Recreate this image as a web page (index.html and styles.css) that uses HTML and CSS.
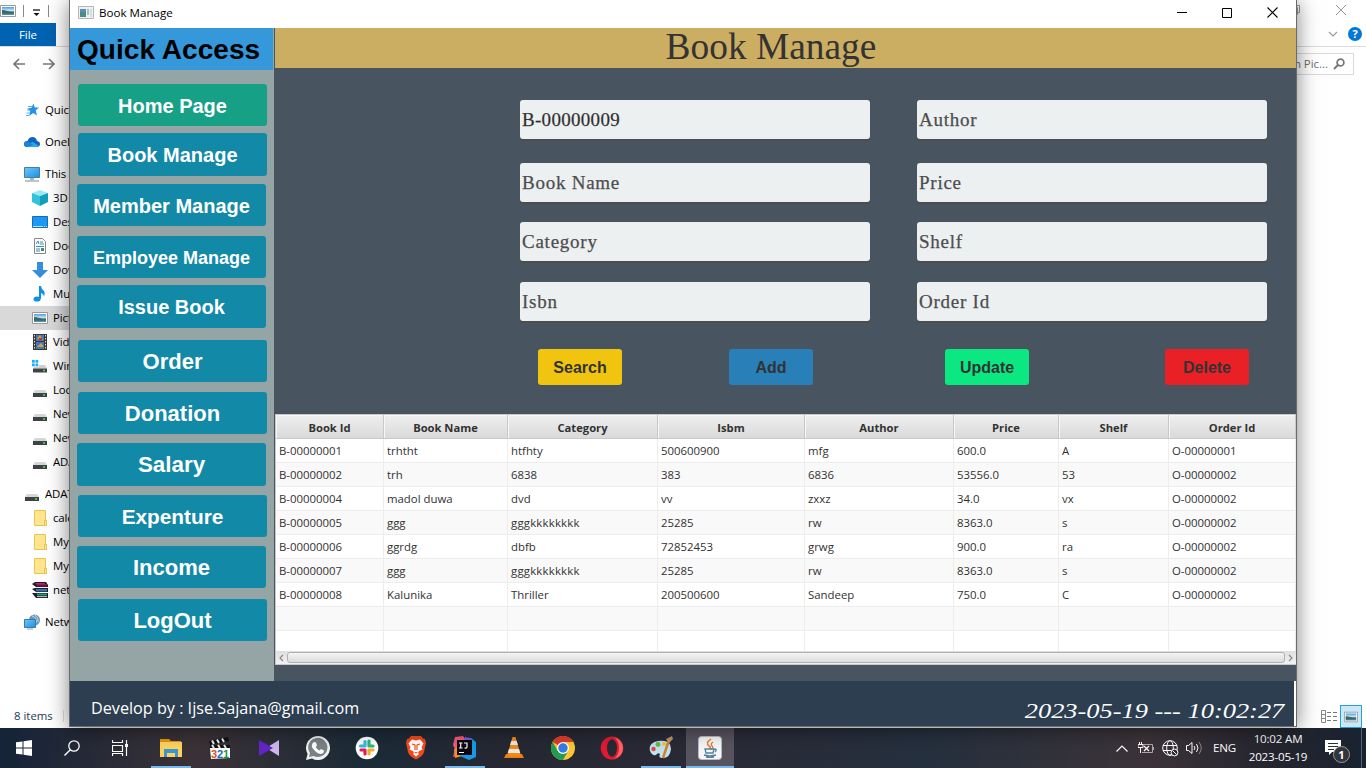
FILE: index.html
```html
<!DOCTYPE html>
<html lang="en">
<head>
<meta charset="utf-8">
<title>Book Manage</title>
<link rel="stylesheet" href="styles.css">
</head>
<body>
<svg class="defs" width="0" height="0">
  <defs>
    <linearGradient id="gBlue" x1="0" y1="0" x2="1" y2="1"><stop offset="0" stop-color="#6cc8fb"/><stop offset="1" stop-color="#1a8fe3"/></linearGradient>
    <linearGradient id="gSky" x1="0" y1="0" x2="0" y2="1"><stop offset="0" stop-color="#4d9de6"/><stop offset=".5" stop-color="#dcebf5"/><stop offset=".6" stop-color="#35665f"/><stop offset="1" stop-color="#5c96bd"/></linearGradient>
    <symbol id="drive" viewBox="0 0 16 16"><path d="M3 8h10l2 3H1z" fill="#d4d6d8"/><path d="M1 11h14v4H1z" fill="#3f4347"/><path d="M11 13h2" stroke="#4be34b" stroke-width="1.4"/></symbol>
    <symbol id="folder" viewBox="0 0 16 16"><path d="M2.500.5h11v10h1v5h-12z" fill="#ffe58f" stroke="#e9c44f"/><path d="M12.500 15v-4.500h2v5h-2" fill="#ffe58f" stroke="#e9c44f"/></symbol>
    <symbol id="picture" viewBox="0 0 16 16"><path d="M.5 2.500h15v11H.5z" fill="#fff" stroke="#999"/><path d="M2 4h12v8H2z" fill="url(#gSky)"/><path d="M2 7q5 0 12 3.500H2z" fill="#386a68"/></symbol>
  </defs>
</svg>
<div class="desktop">
  <div class="explorer">
    <div class="quickbar"><svg width="16" height="16"><use href="#picture"/></svg><i class="vline first"></i><svg class="qdrop" width="9" height="8" viewBox="0 0 9 8"><path d="M1 1h7" stroke="#111" stroke-width="1.300"/><path d="M1.500 4h6l-3 3z" fill="#111"/></svg><i class="vline"></i></div>
    <div class="ribbon"><span class="file">File</span></div>
    <div class="nav"><svg width="14" height="14" viewBox="0 0 14 14"><path d="M13 7H2M7 2L2 7l5 5" fill="none" stroke="#777" stroke-width="1.700"/></svg><svg width="14" height="14" viewBox="0 0 14 14"><path d="M1 7h11M7 2l5 5-5 5" fill="none" stroke="#777" stroke-width="1.700"/></svg></div>
    <div class="tree">
      <div class="node top gap"><svg viewBox="0 0 16 16"><path d="M9.500 1.500l1.300 4 4.200 0-3.300 3 1.300 5-3.800-2.400-4 3 1-4.800L3.500 6.500l4-.7z" fill="#2590e4"/><path d="M4 4.500h4M3 8h4M2.500 11h4M2 13.500h3" stroke="#45aaf0" stroke-width=".9"/></svg>Quic</div>
      <div class="node top gap"><svg viewBox="0 0 16 16"><path d="M3 13Q0 13 0 10t3.500-3Q5 3 8.500 3t4.500 4q3 .5 3 3t-3 3z" fill="#0f65c0"/><path d="M3 13q1-4 6-5l6 4q-1 1-2 1z" fill="#28a8ea"/><path d="M0 9q2-3 5-1l4 3-6 2Q0 13 0 9" fill="#1784d8"/></svg>OneD</div>
      <div class="node top"><svg viewBox="0 0 16 16"><path d="M.5 1.500h15v10H.5z" fill="url(#gBlue)" stroke="#497c9e"/><path d="M6 12h4v2H6z" fill="#9eb8c9"/><path d="M1 15h14" stroke="#75899a"/></svg>This</div>
      <div class="node"><svg viewBox="0 0 16 16"><path d="M8 0l8 3-8 3-8-3z" fill="#9feaf2"/><path d="M0 3l8 3v10l-8-4z" fill="#32c3dc"/><path d="M16 3L8 6v10l8-4z" fill="#139fbd"/></svg>3D</div>
      <div class="node"><svg viewBox="0 0 16 16"><path d="M.5 2.500h15v11H.5z" fill="#1e98f0" stroke="#0870bd"/><path d="M1 12.500h10M12 12.500h1M14 12.500h1" stroke="#bfe5ff"/></svg>Des</div>
      <div class="node"><svg viewBox="0 0 16 16"><path d="M2.500.5h8l3 3v12h-11z" fill="#fff" stroke="#888"/><path d="M4 6l2-3 1 3M8 4h3M8 6h4M4 8.500h8M4 11h4M4 13h4" fill="none" stroke="#378bc4"/><path d="M9 10h3v3H9z" fill="#53866f"/></svg>Doc</div>
      <div class="node"><svg viewBox="0 0 16 16"><path d="M5 0h6v8h5l-8 8-8-8h5z" fill="#358fdd"/></svg>Dow</div>
      <div class="node"><svg viewBox="0 0 16 16"><ellipse cx="5" cy="13" rx="3.500" ry="2.600" fill="#0c91ed"/><path d="M7 13V0h2q.5 3 2.500 4.500T12 11q0-3-3-4v6z" fill="#0c91ed"/></svg>Mu</div>
      <div class="node selected"><svg><use href="#picture"/></svg>Pict</div>
      <div class="node"><svg viewBox="0 0 16 16"><path d="M1 0h14v16H1z" fill="#3a3937"/><path d="M2.500 1v15M13.500 1v15" stroke="#ddd" stroke-dasharray="1.500 1.500"/><path d="M4 1h8v6H4zM4 8h8v7H4z" fill="#4778bf"/><path d="M5 5l3-4 3 5zM5 13l4-4 3 4z" fill="#d9a42b"/><path d="M7 4h3v2H7z" fill="#b73838"/></svg>Vid</div>
      <div class="node"><svg viewBox="0 0 16 16"><path d="M0 2h2.700v2.700H0zM3.500 2h2.700v2.700H3.500zM0 5.500h2.700v2.700H0zM3.500 5.500h2.700v2.700H3.500z" fill="#14aef4"/><path d="M7 7h6l2 3.500H1l1-2h5z" fill="#ced0d2"/><path d="M1 10.500h14v4H1z" fill="#3f4347"/><path d="M11 12.500h2" stroke="#4be34b" stroke-width="1.400"/></svg>Win</div>
      <div class="node"><svg><use href="#drive"/></svg>Loc</div>
      <div class="node"><svg><use href="#drive"/></svg>New</div>
      <div class="node"><svg><use href="#drive"/></svg>New</div>
      <div class="node gap"><svg><use href="#drive"/></svg>ADA</div>
      <div class="node top"><svg><use href="#drive"/></svg>ADAT</div>
      <div class="node"><svg><use href="#folder"/></svg>cale</div>
      <div class="node"><svg><use href="#folder"/></svg>My</div>
      <div class="node"><svg><use href="#folder"/></svg>My</div>
      <div class="node gap"><svg viewBox="0 0 16 16"><path d="M0 2l3-2h11l2 3v2H4zM0 7l3-1h13v4H4zM0 11h16v5H4z" fill="#241b24"/><path d="M3 1h9l3 2H5z" fill="#b42b6a"/><path d="M5 3.500h10" stroke="#7c1240" stroke-width="2"/><path d="M4 8h11" stroke="#2878bd" stroke-width="2"/><path d="M5 12.500h10" stroke="#159f76" stroke-width="2"/><path d="M4 5.500h11M4 10.300h11M5 14.600h10" stroke="#eee" stroke-width=".8"/></svg>net</div>
      <div class="node top"><svg viewBox="0 0 16 16"><circle cx="10.500" cy="6" r="5.500" fill="#6896b5"/><path d="M8 2q5 1 4 7M11 1q4 3 3 7" stroke="#c2dcea" fill="none"/><path d="M.5 5.500h11v8H.5z" fill="url(#gBlue)" stroke="#43799e"/><path d="M3 15h6" stroke="#87a5bb"/></svg>Netw</div>
    </div>
    <div class="status">8 items<i></i></div>
  </div>
  <div class="explorer-right">
    <div class="right-caption"><svg width="10" height="10" viewBox="0 0 10 10"><path d="M.5 2.500h7v7h-7zM2.500 2.500v-2h7v7h-2" fill="none" stroke="#999"/></svg><svg width="12" height="12" viewBox="0 0 12 12"><path d="M1 1l10 10M11 1L1 11" stroke="#999"/></svg></div>
    <div class="right-ribbon"><svg width="10" height="6" viewBox="0 0 10 6"><path d="M1 1l4 4 4-4" fill="none" stroke="#999" stroke-width="1.200"/></svg><span class="help">?</span></div>
    <div class="search"><span>n Pic...</span><svg width="12" height="12" viewBox="0 0 12 12"><circle cx="7.500" cy="4.500" r="3.400" fill="none" stroke="#777" stroke-width="1.700"/><path d="M5 7L1 11" stroke="#777" stroke-width="2"/></svg></div>
    <div class="views"><svg width="17" height="13" viewBox="0 0 17 13"><path d="M.5.5h4v12h-4zM.5 4.500h4M.5 8.500h4" fill="none" stroke="#888"/><path d="M6 2.500h4M12 2.500h4M6 6.500h4M12 6.500h4M6 10.500h4M12 10.500h4" stroke="#777"/></svg><span><svg width="14" height="14"><use href="#picture"/></svg></span></div>
  </div>

  <div class="window">
    <div class="titlebar"><svg width="16" height="14" viewBox="0 0 16 14"><path d="M.5.5h15v12H.5z" fill="#eef0f1" stroke="#b4b8bc"/><path d="M2 3h6v8H2z" fill="#4a8d83"/><path d="M2 3h6v3H2z" fill="#5b8db5"/><path d="M9 3h2v6H9z" fill="#9fc8b8"/><path d="M12 3h2v8h-2z" fill="#d6dde0"/></svg><span class="caption">Book Manage</span>
      <div class="controls"><svg width="10" height="11" viewBox="0 0 10 11"><path d="M0 5.500h10" stroke="#000"/></svg><svg width="10" height="10" viewBox="0 0 10 10"><path d="M.5.5h9v9h-9z" fill="none" stroke="#000"/></svg><svg width="11" height="11" viewBox="0 0 11 11"><path d="M.5.5l10 10M10.500.5l-10 10" stroke="#000" stroke-width="1.100"/></svg></div>
    </div>
    <div class="app">
      <div class="sidebar">
        <div class="quick">Quick Access</div>
        <div class="menu">
          <button class="item home">Home Page</button>
          <button class="item book">Book Manage</button>
          <button class="item member left">Member Manage</button>
          <button class="item employee left">Employee Manage</button>
          <button class="item issue left">Issue Book</button>
          <button class="item order big">Order</button>
          <button class="item donation big">Donation</button>
          <button class="item salary big left">Salary</button>
          <button class="item expenture">Expenture</button>
          <button class="item income big left">Income</button>
          <button class="item logout big">LogOut</button>
        </div>
      </div>
      <div class="main">
        <h1>Book Manage</h1>
        <div class="fields">
          <div class="field value">B-00000009</div><div class="field">Author</div>
          <div class="field">Book Name</div><div class="field">Price</div>
          <div class="field">Category</div><div class="field">Shelf</div>
          <div class="field">Isbn</div><div class="field">Order Id</div>
        </div>
        <div class="actions"><button class="search-btn">Search</button><button class="add-btn">Add</button><button class="update-btn">Update</button><button class="delete-btn">Delete</button></div>
        <div class="tableview">
          <div class="rows">
            <div class="tr head"><b>Book Id</b><b>Book Name</b><b>Category</b><b>Isbm</b><b>Author</b><b>Price</b><b>Shelf</b><b>Order Id</b></div>
            <div class="tr"><span>B-00000001</span><span>trhtht</span><span>htfhty</span><span>500600900</span><span>mfg</span><span>600.0</span><span>A</span><span>O-00000001</span></div>
            <div class="tr"><span>B-00000002</span><span>trh</span><span>6838</span><span>383</span><span>6836</span><span>53556.0</span><span>53</span><span>O-00000002</span></div>
            <div class="tr"><span>B-00000004</span><span>madol duwa</span><span>dvd</span><span>vv</span><span>zxxz</span><span>34.0</span><span>vx</span><span>O-00000002</span></div>
            <div class="tr"><span>B-00000005</span><span>ggg</span><span class="wide">gggkkkkkkkk</span><span>25285</span><span>rw</span><span>8363.0</span><span>s</span><span>O-00000002</span></div>
            <div class="tr"><span>B-00000006</span><span>ggrdg</span><span>dbfb</span><span>72852453</span><span>grwg</span><span>900.0</span><span>ra</span><span>O-00000002</span></div>
            <div class="tr"><span>B-00000007</span><span>ggg</span><span class="wide">gggkkkkkkkk</span><span>25285</span><span>rw</span><span>8363.0</span><span>s</span><span>O-00000002</span></div>
            <div class="tr"><span>B-00000008</span><span>Kalunika</span><span>Thriller</span><span>200500600</span><span>Sandeep</span><span>750.0</span><span>C</span><span>O-00000002</span></div>
            <div class="tr"><span></span><span></span><span></span><span></span><span></span><span></span><span></span><span></span></div>
            <div class="tr"><span></span><span></span><span></span><span></span><span></span><span></span><span></span><span></span></div>
          </div>
          <div class="scroll"><svg width="5" height="8" viewBox="0 0 5 8"><path d="M4 1L1 4l3 3" fill="none" stroke="#888" stroke-width="1.200"/></svg><i></i><svg width="5" height="8" viewBox="0 0 5 8"><path d="M1 1l3 3-3 3" fill="none" stroke="#888" stroke-width="1.200"/></svg></div>
        </div>
      </div>
    </div>
    <div class="footer"><span class="credit">Develop by : Ijse.Sajana@gmail.com</span><span class="stamp">2023-05-19 --- 10:02:27</span></div>
  </div>
</div>

<div class="taskbar">
  <div class="sys"><svg width="16" height="16" viewBox="0 0 16 16"><path d="M0 2.300L6.500 1.400v6.100H0zM7.500 1.200L16 0v7.500H7.500zM0 8.500h6.500v6.100L0 13.700zM7.500 8.500H16V16l-8.500-1.200z" fill="#fff"/></svg></div>
  <div class="sys"><svg width="16" height="16" viewBox="0 0 16 16"><circle cx="10" cy="6" r="5.200" fill="none" stroke="#fff" stroke-width="1.300"/><path d="M6.300 9.700L.5 15.500" stroke="#fff" stroke-width="1.400"/></svg></div>
  <div class="sys"><svg width="16" height="16" viewBox="0 0 16 16"><path d="M.5 0v2.500h10V0M.5 5.500h10v6H.5zM.5 16v-2.500h10V16M14.500 0v16" fill="none" stroke="#fff" stroke-width="1.200"/><path d="M13 4h3v3h-3z" fill="#fff"/></svg></div>
  <div class="apps">
    <div class="task on"><svg viewBox="0 0 24 24"><path d="M1 3h9l2 2h10v3H1z" fill="#e29a0e"/><path d="M1 6h22v15H1z" fill="#ffd35c"/><path d="M5 13h14v8h-3v-4H8v4H5z" fill="#3996da"/></svg></div>
    <div class="task"><svg viewBox="0 0 24 24"><path d="M1 5L20 1l1 4L2 9z" fill="#111"/><path d="M4 4.500l2 3.500M9 3.500l2 3.500M14 2.500l2 3.500" stroke="#eee" stroke-width="2"/><path d="M2 9h20v3H2z" fill="#111"/><path d="M4 9l2 3M10 9l2 3M16 9l2 3" stroke="#eee" stroke-width="2"/><path d="M2 12h20v10L3 23z" fill="#fff"/><g font-family="Liberation Sans" font-weight="bold" font-size="11"><text x="3" y="21.500" fill="#d8521c">3</text><text x="9" y="21.500" fill="#236bb5">2</text><text x="15" y="21.500" fill="#24963a">1</text></g></svg></div>
    <div class="task"><svg viewBox="0 0 24 24"><path d="M22 4v16L9 12z" fill="#cdb8ef"/><path d="M2 4l14 8-14 8z" fill="#6425c9"/></svg></div>
    <div class="task"><svg viewBox="0 0 24 24"><path d="M0 24l1.600-6A12 12 0 1 1 6 22.400z" fill="#f2f2f2"/><path d="M3 21l1-4a9.600 9.600 0 1 1 3.500 3z" fill="#788387"/><path d="M8 6l2 .5 1 3-1.300 1.500q1.300 2.500 3.800 3.500l1.500-1.500 3 1.500q0 3-3 3.500-3 0-6.500-3.500T6 9q0-2 2-3" fill="#fff"/></svg></div>
    <div class="task"><svg viewBox="0 0 24 24"><circle cx="12" cy="12" r="11.300" fill="#fff"/><g stroke-width="3.200" stroke-linecap="round"><path d="M10 5.500V10M5.500 10H10" stroke="#36b9e8"/><path d="M14 5v5M14 10h4" stroke="#2eb67d"/><path d="M14 14h4M14 14v4" stroke="#ecb22e"/><path d="M6 14h4M10 14v4" stroke="#e01e5a"/></g></svg></div>
    <div class="task"><svg viewBox="0 0 24 24"><path d="M7 0h10l2 2.500 2 .5 1 4-2 9q-1 4-8 7.500Q5 20 4 16L2 7l1-4 2-.5z" fill="#f5491c"/><path d="M8 3.500l4 1 4-1 3.500 4-2 4 1 2-3.500 1.500-1 2 1 1-3 2.500L9 18l1-1-1-2-3.500-1.500 1-2-2-4z" fill="#fff"/><path d="M8 8l3 1v5M16 8l-3 1v5" fill="none" stroke="#ef5126" stroke-width="1.200"/><path d="M10 16h4l-2 1.600z" fill="#f5491c"/></svg></div>
    <div class="task on"><svg viewBox="0 0 24 24"><path d="M2 1l8-1 3 4-7 15-6 2 2-8-2-4z" fill="#f35b79"/><path d="M1 13l6-3 2 10-7 2z" fill="#f68c24"/><path d="M12 2l6 0 5 4v15l-7 3-9-4z" fill="#179be8"/><path d="M12 1l5 1 2 3-8 1z" fill="#8154dd"/><path d="M4 4h15v15H4z" fill="#0b0810"/><path d="M6 7h3.500M7.700 7v5M6 12h3.500M11 7h3v4q0 1.500-2.500 1M6 16.500h5" fill="none" stroke="#fff" stroke-width="1.200"/></svg></div>
    <div class="task"><svg viewBox="0 0 24 24"><path d="M4 18h16l2 4H2z" fill="#ef7d10"/><path d="M10.500 1h3L19 20H5z" fill="#f48a18"/><path d="M9.300 5h5.400l1.200 4H8.100zM7 13h10l1.300 4H5.700z" fill="#e9e9e6"/></svg></div>
    <div class="task"><svg viewBox="0 0 24 24"><circle cx="12" cy="12" r="12" fill="#fcc934"/><path d="M12 12L1.600 6A12 12 0 0 1 22.400 6H12z" fill="#e33b2e"/><path d="M1.600 6A12 12 0 0 0 12 24l5.200-9L12 12l-5.200 3z" fill="#249d50"/><circle cx="12" cy="12" r="6" fill="#fff"/><circle cx="12" cy="12" r="4.700" fill="#347de8"/></svg></div>
    <div class="task"><svg viewBox="0 0 24 24"><ellipse cx="12" cy="12" rx="11.300" ry="11.500" fill="#e11b31"/><path d="M14 1q9 3 9 11t-9 11q5-4 5-11T14 1" fill="#ff6664"/><ellipse cx="12" cy="12" rx="5" ry="8.700" fill="#272a33"/></svg></div>
    <div class="task on"><svg viewBox="0 0 24 24"><path d="M1 15Q-1 7 9 5q13-2 13 8-1 9-8 9-5 0-3-4-2-2-4 1-4 1-6-4" fill="#bfe3ef"/><circle cx="4.500" cy="13" r="2.200" fill="#e5483d"/><circle cx="9" cy="8.500" r="2.400" fill="#65b947"/><circle cx="15" cy="8" r="2" fill="#f7c03d"/><path d="M20 4l-6 18" stroke="#d5802d" stroke-width="2.500"/><path d="M17 3l6-3 1 3-4 4z" fill="#bd9464"/></svg></div>
    <div class="task active"><svg viewBox="0 0 24 24"><rect x=".5" y=".5" width="23" height="23" rx="3" fill="#f7f7f7" stroke="#b7bdc1"/><path d="M13 3q-6 4-2 7 2 1 1 3M15 6q-3 2-1 4t-1 3" fill="none" stroke="#ed762d" stroke-width="1.400"/><path d="M7 13h9l-1 4H8zM16 13q4 0 1 3M6 19q6 1.700 12 0M8 21q4 .8 8 0" fill="none" stroke="#56819e" stroke-width="1.300"/></svg></div>
  </div>
  <div class="tray">
    <svg class="chev" width="12" height="7" viewBox="0 0 12 7"><path d="M.5 6.500L6 1l5.500 5.500" fill="none" stroke="#fff" stroke-width="1.200"/></svg>
    <svg class="batt" width="16" height="12" viewBox="0 0 16 12"><path d="M1.500 0v2M3.500 0v2M0 2.500h5v3H0zM2.500 6v5" fill="none" stroke="#fff"/><path d="M5 2.500h9.500v8H4M15.500 5v3" fill="none" stroke="#aaa"/><path d="M6 4l5 5M11 4L6 9" stroke="#fff" stroke-width="1.200"/></svg>
    <svg class="globe" width="17" height="17" viewBox="0 0 17 17"><g fill="none" stroke="#fff"><circle cx="8" cy="8" r="7.300"/><ellipse cx="8" cy="8" rx="3.300" ry="7.300"/><path d="M1 5.500h14M1 10.500h8"/></g><circle cx="12.500" cy="12.500" r="3.400" fill="#2b2b34" stroke="#fff"/><path d="M10.500 10.500l4 4" stroke="#fff"/></svg>
    <svg class="sound" width="17" height="14" viewBox="0 0 17 14"><path d="M.5 4.500h2L6 1.500v11L2.500 9.500h-2zM8 5q2 2 0 4M10.500 3q3 4 0 8" fill="none" stroke="#fff"/><path d="M13 1q4.500 6 0 12" fill="none" stroke="#888"/></svg>
    <span class="lang">ENG</span>
    <div class="clock"><span>10:02 AM</span><span>2023-05-19</span></div>
    <div class="notice"><svg width="16" height="16" viewBox="0 0 16 16"><path d="M0 0h16v12H7l-3 3v-3H0z" fill="#fff"/><path d="M3 3.500h10M3 6.500h10M3 9.500h6" stroke="#29303b"/></svg><b>1</b></div>
    <i class="peek"></i>
  </div>
</div>
</body>
</html>
```

FILE: styles.css
```css
* { box-sizing: border-box; }
body { margin: 0; width: 1366px; height: 768px; overflow: hidden; background: #fff; font: 11.4px "Open Sans", "Noto Sans", sans-serif; color: #000; }
svg { display: block; flex: none; }
button { border: 0; padding: 0; margin: 0; font: bold 20px/1 "Liberation Sans", Arial, sans-serif; }
.defs { position: absolute; }
.desktop { position: relative; height: 728px; display: flex; justify-content: space-between; }

/* Explorer behind the window */
.explorer { width: 90px; height: 728px; overflow: hidden; display: flex; flex-direction: column; }
.quickbar { height: 22px; display: flex; align-items: center; }
.vline { width: 1px; height: 12px; background: #888; }
.vline.first { margin: 0 8px 0 7px; }
.qdrop { margin: 3px 7px 0 0; }
.ribbon { height: 25px; padding-top: 1px; border-bottom: 1px solid #dadbdc; }
.file { display: block; width: 56px; height: 23px; background: #0063b1; color: #fff; line-height: 23px; text-align: center; }
.nav { height: 51px; padding: 10px 0 0 12px; display: flex; gap: 16px; }
.tree { flex: 1; }
.node { height: 24px; padding-left: 32px; display: flex; align-items: center; gap: 5px; white-space: nowrap; line-height: 16px; letter-spacing: -.1px; }
.node svg { width: 16px; height: 16px; }
.node.top { padding-left: 24px; }
.node.gap { margin-bottom: 8px; }
.node.selected { background: #d9d9d9; }
.status { height: 24px; padding: 0 0 1px 14px; display: flex; align-items: center; gap: 10px; color: #1e395b; }
.status i { width: 1px; height: 12px; background: #ddd; }
.explorer-right { width: 70px; height: 728px; display: flex; flex-direction: column; align-items: flex-end; }
.right-caption { height: 22px; width: 100%; padding: 4px 19px 0 0; display: flex; justify-content: space-between; }
.right-caption svg:first-child { margin: 1px 0 0 -6px; }
.right-ribbon { height: 25px; width: 100%; padding-right: 4px; border-bottom: 1px solid #dadbdc; display: flex; justify-content: flex-end; align-items: center; gap: 10px; }
.help { width: 14px; height: 14px; border-radius: 7px; background: #0078d7; color: #fff; font-weight: bold; font-size: 11px; line-height: 14px; text-align: center; }
.search { width: 70px; height: 22px; margin: 6px 12px 0 0; padding: 0 8px 1px 0; border: 1px solid #d9d9d9; display: flex; align-items: center; justify-content: flex-end; gap: 5px; color: #6d6d6d; }
.views { margin-top: auto; margin-right: 4px; display: flex; align-items: center; gap: 2px; height: 23px; }
.views span { width: 22px; height: 23px; border: 1px solid #26a0da; background: #cbe8f6; display: flex; align-items: center; justify-content: center; }

/* Application window */
.window { position: absolute; left: 69px; top: 0; width: 1228px; height: 727px; border: solid #666b70; border-width: 0 1px 1px; box-shadow: 0 2px 20px rgba(0,0,0,.5); background: #fff; display: flex; flex-direction: column; }
.titlebar { height: 28px; padding: 0 18px 3px 8px; display: flex; align-items: center; }
.caption { margin-left: 5px; font-size: 11.6px; }
.controls { margin-left: auto; display: flex; align-items: center; gap: 35px; }
.app { height: 653px; display: flex; }
.sidebar { width: 204px; background: #95a5a6; }
.quick { height: 42px; width: 203px; padding-left: 7px; background: #3498db; font: bold 28px/43px "Liberation Sans", Arial, sans-serif; letter-spacing: .05px; white-space: nowrap; }
.menu { padding: 14px 0 0 8px; display: flex; flex-direction: column; }
.item { width: 189px; height: 42px; border-radius: 3px; background: #1289a7; color: #fff; padding-top: 2px; }
.item.left { margin-left: -1px; }
.item.big { font-size: 22px; }
.item.home { background: #16a085; margin-bottom: 7px; }
.item.book { height: 43px; margin-bottom: 8px; padding-top: 0; }
.item.member { margin-bottom: 10px; }
.item.employee { font-size: 18px; margin-bottom: 7px; }
.item.issue { height: 43px; margin-bottom: 12px; padding-top: 0; }
.item.order { margin-bottom: 10px; }
.item.donation { margin-bottom: 9px; }
.item.salary { height: 43px; margin-bottom: 9px; padding-top: 2px; font-size: 22.4px; }
.item.expenture { font-size: 20.8px; margin-bottom: 9px; }
.item.income { margin-bottom: 11px; }
.main { width: 1022px; padding-left: 1px; background: #485460; display: flex; flex-direction: column; }
h1 { margin: 0; height: 40px; background: #ccae62; color: #333; text-align: center; font: 37.4px/38px "Liberation Serif", "Times New Roman", serif; padding-right: 29px; }
.fields { padding: 32px 29px 0 245px; display: grid; grid-template-columns: 350px 350px; grid-template-rows: 63px 59px 60px 39px; column-gap: 47px; }
.field { height: 39px; padding-left: 2px; border-radius: 3px; background: #ecf0f1; box-shadow: 0 2px 0 #4d4d4d; color: #4d4d4d; font: 19px/40px "Liberation Serif", "Times New Roman", serif; letter-spacing: .75px; -webkit-text-stroke: .25px #4d4d4d; }
.field.value { color: #2b2b2b; letter-spacing: .3px; }
.actions { margin-top: 28px; padding-left: 263px; display: flex; height: 36px; }
.actions button { width: 84px; height: 36px; padding-top: 1px; border-radius: 3px; font-size: 16px; color: #333; }
.search-btn { background: #f1c40f; }
.add-btn { background: #2980b9; margin-left: 107px; }
.update-btn { background: #0be881; margin-left: 132px; }
.delete-btn { background: #ea2027; margin-left: 136px; }
.tableview { margin-top: 29px; height: 251px; border: 1px solid #c8c8c8; border-right: 0; background: #fff; color: #323232; }
.rows { height: 236px; overflow: hidden; }
.tr { height: 24px; display: grid; grid-template-columns: 108px 124px 150px 147px 149px 105px 110px 127px; }
.tr span { border-right: 1px solid #ededed; border-bottom: 1px solid #ededed; padding-left: 3px; line-height: 23px; white-space: nowrap; }
.tr span.wide { letter-spacing: .2px; }
.tr:nth-child(odd) { background: #f9f9f9; }
.tr.head { background: linear-gradient(#efefef, #d9d9d9); }
.tr b { border-right: 1px solid #c8c8c8; border-bottom: 1px solid #c8c8c8; box-shadow: inset 1px 1px #f7f7f7; text-align: center; line-height: 25px; height: 24px; font-size: 11.2px; }
.scroll { height: 13px; padding: 0 3px; background: linear-gradient(#dedede, #f2f2f2); display: flex; align-items: center; justify-content: space-between; }
.scroll i { width: 998px; height: 11px; border: 1px solid #b0b0b0; border-radius: 3px; background: linear-gradient(#f4f4f4, #dcdcdc); }
.footer { flex: 1; margin-right: 2px; padding: 9px 10px 0 21px; background: #2c3e50; color: #fff; display: flex; justify-content: space-between; align-items: center; }
.credit { font-size: 16.2px; }
.stamp { margin-top: 5px; font: italic 22px/30px "Liberation Serif", Georgia, serif; transform: scaleX(1.2); transform-origin: right; white-space: nowrap; }

/* Taskbar */
.taskbar { height: 40px; display: flex; color: #fff; background: linear-gradient(90deg, #142338, #3b3237 14%, #1b2b38 27%, #252833 36%, #2a2a37 52%, #25303e 68%, #3c3339 84%, #25262f 93%, #182230); }
.sys { width: 48px; display: flex; align-items: center; justify-content: center; }
.apps { margin-left: 2px; display: flex; }
.task { width: 49px; padding: 8px 0 0 12.500px; }
.task svg { width: 24px; height: 24px; }
.task.on { background: linear-gradient(#76b9ed, #76b9ed) 5px 38px / 40px 2px no-repeat; }
.task.active { width: 48px; margin-left: 1px; padding-left: 12px; background: #575460; border-bottom: 2px solid #76b9ed; }
.tray { margin-left: auto; display: flex; align-items: center; padding-right: 4px; font-size: 11.6px; }
.batt { margin-left: 10px; }
.globe { margin-left: 8px; }
.sound { margin-left: 7px; }
.lang { margin: 0 0 2px 10px; letter-spacing: -.2px; }
.clock { width: 60px; margin-left: 12px; line-height: 18px; display: flex; flex-direction: column; align-items: center; letter-spacing: -.2px; }
.notice { position: relative; width: 24px; height: 24px; margin-left: 17px; padding-top: 4px; }
.notice b { position: absolute; left: 8px; top: 10px; width: 17px; height: 17px; border: 1px solid #999; border-radius: 9px; background: #33353b; text-align: center; font-size: 11px; line-height: 15px; }
.peek { width: 1px; height: 40px; margin-left: 12px; background: #59616b; }
```
